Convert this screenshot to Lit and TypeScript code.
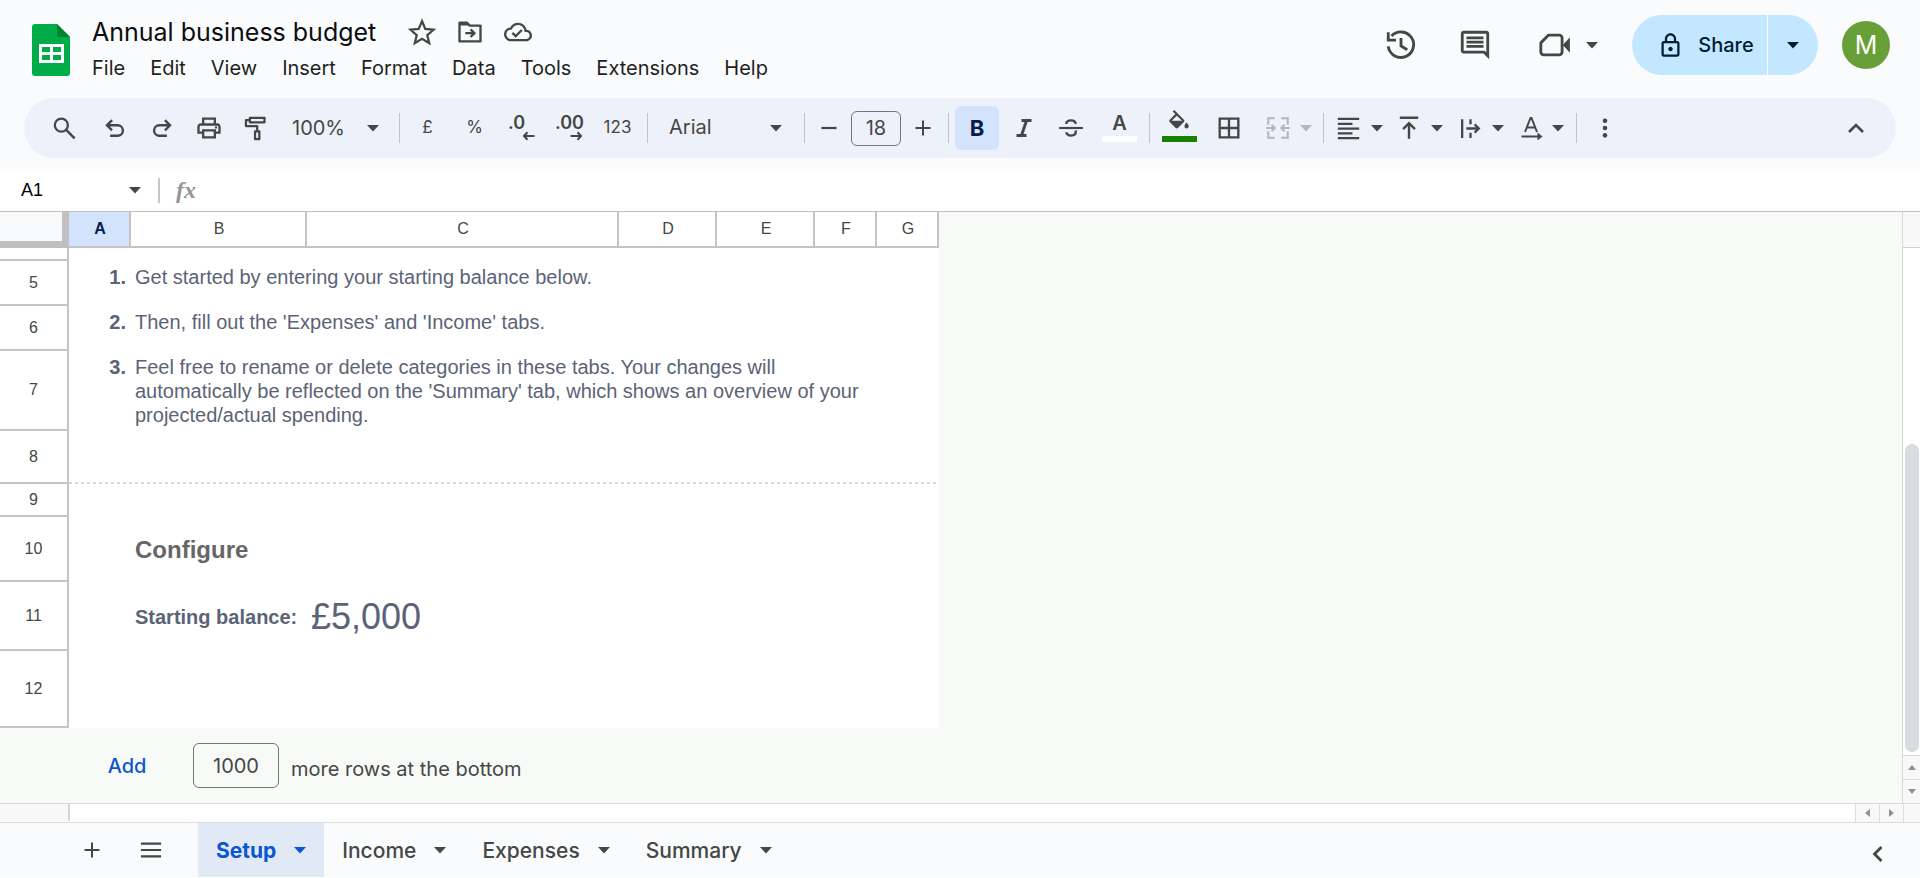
import { LitElement, html, css, svg, nothing } from "lit";
import { customElement, property } from "lit/decorators.js";

const icons: Record<string, unknown> = {
  star: svg`<path d="M12 2.6l2.8 6.7 7.2.6-5.5 4.7 1.7 7-6.2-3.7-6.2 3.7 1.7-7L2 9.900l7.200-.6z" fill="none" stroke="currentColor" stroke-width="1.900"/>`,
  move: svg`<path d="M3 4h6.500l2 2.500H21V20H3z" fill="none" stroke="currentColor" stroke-width="2" stroke-linejoin="round"/><path d="M3 3.500h6.500l2 3H3z" fill="currentColor"/><path d="M8 13h7M12.500 9.700l3.300 3.300-3.300 3.300" fill="none" stroke="currentColor" stroke-width="2"/>`,
  cloud: svg`<path d="M19.350 10.040C18.670 6.590 15.640 4 12 4 9.110 4 6.600 5.640 5.350 8.040 2.340 8.360 0 10.910 0 14c0 3.310 2.690 6 6 6h13c2.760 0 5-2.240 5-5 0-2.640-2.050-4.780-4.650-4.960zM19 18H6c-2.210 0-4-1.790-4-4 0-2.050 1.530-3.760 3.560-3.970l1.070-.11.5-.95C8.080 7.140 9.940 6 12 6c2.620 0 4.880 1.860 5.390 4.430l.3 1.500 1.530.11c1.560.1 2.780 1.410 2.780 2.960 0 1.650-1.350 3-3 3zm-9-3.820l-2.090-2.090L6.500 13.500 10 17l6.010-6.010-1.410-1.410z" fill="currentColor"/>`,
  history: svg`<path d="M5.300 5.700A9 9 0 1 1 3 13M3 3v5.500h5.500" fill="none" stroke="currentColor" stroke-width="2"/><path d="M12 7v5.600l4.400 2.700" fill="none" stroke="currentColor" stroke-width="2"/>`,
  comment: svg`<path d="M21.990 4c0-1.100-.89-2-1.990-2H4c-1.100 0-2 .9-2 2v12c0 1.100.9 2 2 2h14l4 4-.01-18zM20 4v13.170L18.830 16H4V4h16zM6 12h12v2H6zm0-3h12v2H6zm0-3h12v2H6z" fill="currentColor"/>`,
  camera: svg`<path d="M7.500 5H15a2 2 0 0 1 2 2v10a2 2 0 0 1-2 2H4a2 2 0 0 1-2-2v-6.500z" fill="none" stroke="currentColor" stroke-width="2" stroke-linejoin="round"/><path d="M17.500 12L22.500 6.500v11z" fill="currentColor"/>`,
  lock: svg`<path d="M18 8h-1V6c0-2.760-2.240-5-5-5S7 3.240 7 6v2H6c-1.100 0-2 .9-2 2v10c0 1.100.9 2 2 2h12c1.100 0 2-.9 2-2V10c0-1.100-.9-2-2-2zM9 6c0-1.660 1.340-3 3-3s3 1.340 3 3v2H9V6zm9 14H6V10h12v10zm-6-3c1.100 0 2-.9 2-2s-.9-2-2-2-2 .9-2 2 .9 2 2 2z" fill="currentColor"/>`,
  search: svg`<circle cx="9.200" cy="9" r="5.800" fill="none" stroke="currentColor" stroke-width="2"/><path d="M13.500 13.300l7.500 7.500" stroke="currentColor" stroke-width="2.200"/>`,
  undo: svg`<path d="M5 9.500h9.500a4.800 4.800 0 0 1 0 9.600H7.500M9.300 4.800L4.600 9.500l4.700 4.700" fill="none" stroke="currentColor" stroke-width="2.200"/>`,
  redo: svg`<path d="M19 9.500H9.500a4.800 4.800 0 0 0 0 9.600h7M14.700 4.800l4.700 4.700-4.700 4.700" fill="none" stroke="currentColor" stroke-width="2.200"/>`,
  print: svg`<path d="M19 8h-1V3H6v5H5c-1.660 0-3 1.340-3 3v6h4v4h12v-4h4v-6c0-1.660-1.340-3-3-3zM8 5h8v3H8V5zm8 12v2H8v-4h8v2zm2-2v-2H6v2H4v-4c0-.55.45-1 1-1h14c.55 0 1 .45 1 1v4h-2z" fill="currentColor"/><circle cx="18" cy="11.500" r="1" fill="currentColor"/>`,
  paint: svg`<path d="M7 2.500h13v4H7zM7 4.500H3.500v5.300h10v4.700M11.600 14.500h3.800v7h-3.800z" fill="none" stroke="currentColor" stroke-width="2" stroke-linejoin="round"/>`,
  minus: svg`<path d="M4.500 12h15" stroke="currentColor" stroke-width="2.200"/>`,
  plus: svg`<path d="M4.500 12h15M12 4.500v15" stroke="currentColor" stroke-width="2"/>`,
  left: svg`<path d="M1 14h22M9 6.500L2 14l7 7.500" fill="none" stroke="currentColor" stroke-width="4"/>`,
  right: svg`<path d="M1 14h22M15 6.500l7 7.500-7 7.500" fill="none" stroke="currentColor" stroke-width="4"/>`,
  italic: svg`<path d="M9.500 4.500h10M4.500 19.500h10M14.500 4.500l-5 15" fill="none" stroke="currentColor" stroke-width="3"/>`,
  strike: svg`<path d="M1 12h22" stroke="currentColor" stroke-width="2"/><path d="M16.500 8.200C16 6 14.300 5 12 5 9.600 5 7.600 6 7.600 8.300M7.500 16c.5 2 2.200 3 4.500 3 2.500 0 4.400-1 4.400-3.200 0-.6-.1-1-.3-1.500" fill="none" stroke="currentColor" stroke-width="2.200"/>`,
  bucket: svg`<path d="M16.560 8.940L7.620 0 6.210 1.410l2.380 2.380-5.150 5.150c-.59.59-.59 1.540 0 2.120l5.500 5.500c.29.29.68.44 1.060.44s.77-.15 1.060-.44l5.500-5.500c.59-.58.59-1.530 0-2.120zM5.210 10L10 5.210 14.790 10H5.210zM19 11.500s-2 2.170-2 3.500c0 1.100.9 2 2 2s2-.9 2-2c0-1.330-2-3.500-2-3.500z" fill="currentColor"/>`,
  borders: svg`<path d="M3 3v18h18V3H3zm8 16H5v-6h6v6zm0-8H5V5h6v6zm8 8h-6v-6h6v6zm0-8h-6V5h6v6z" fill="currentColor"/>`,
  merge: svg`<path d="M9 3H3v6M9 21H3v-6M15 3h6v6M15 21h6v-6M1 12h8M6 9l3 3-3 3M23 12h-8M18 9l-3 3 3 3" fill="none" stroke="currentColor" stroke-width="2"/>`,
  align: svg`<path d="M2.500 3.500h19M2.500 7.800h13M2.500 12h19M2.500 16.300h13M2.500 20.500h19" stroke="currentColor" stroke-width="2"/>`,
  valign: svg`<path d="M3.500 2.500h17M12 22V8M6.500 13L12 7.500l5.500 5.500" fill="none" stroke="currentColor" stroke-width="2.200"/>`,
  wrap: svg`<path d="M4 3v18M12 3v5M12 16v5M8 12h12M16 8l4 4-4 4" fill="none" stroke="currentColor" stroke-width="2.200"/>`,
  rotate: svg`<path d="M6 16L11.500 2h1L18 16M8 11.500h8M2.500 20.500H20" fill="none" stroke="currentColor" stroke-width="2"/><path d="M18.500 16.500l5 4-5 4z" fill="currentColor"/>`,
  dots: svg`<circle cx="12" cy="4" r="2.500" fill="currentColor"/><circle cx="12" cy="12" r="2.500" fill="currentColor"/><circle cx="12" cy="20" r="2.500" fill="currentColor"/>`,
  up: svg`<path d="M5 16l7-7 7 7" fill="none" stroke="currentColor" stroke-width="2.600"/>`,
  back: svg`<path d="M15.500 5l-7 7 7 7" fill="none" stroke="currentColor" stroke-width="2.800"/>`,
  menu: svg`<path d="M1 5h22M1 12h22M1 19h22" stroke="currentColor" stroke-width="2.400"/>`,
};

const icon = (name: string, size = 24) =>
  html`<svg width=${size} height=${size} viewBox="0 0 24 24" aria-hidden="true">${icons[name]}</svg>`;

const caret = html`<svg class="caret" width="12" height="7" viewBox="0 0 12 7" aria-hidden="true">
  <path d="M0 0h12L6 6.500z" fill="currentColor" />
</svg>`;

const shared = css`
  * { box-sizing: border-box; }
  button, input, select { font: inherit; color: inherit; border: 0; background: none; padding: 0; margin: 0; border-radius: 0; }
  button { display: flex; align-items: center; justify-content: center; cursor: pointer; }
  svg { display: block; flex: none; }
`;

@customElement("doc-header")
class DocHeader extends LitElement {
  static styles = [shared, css`
    :host { display: flex; align-items: flex-start; justify-content: space-between; height: 98px; padding: 0 30px 0 32px; }
    .left, .right, .name { display: flex; }
    .logo { margin: 24px 22px 0 0; }
    .name { align-items: center; gap: 20px; height: 36px; padding-top: 3px; margin-top: 12px; color: #444746; }
    .name h1 { margin: 0 12px 0 0; font-size: 25px; line-height: 36px; font-weight: 400; color: #0c0d0e; white-space: nowrap; }
    .menus { display: flex; gap: 25px; margin-top: 4px; font-size: 20px; line-height: 32px; color: #1f1f1f; }
    .right { align-items: center; height: 60px; margin-top: 15px; color: #444746; }
    .tool { width: 74px; height: 48px; }
    .meet { width: 100px; gap: 14px; height: 48px; margin: 0 14px 0 6px; }
    .share { display: flex; height: 60px; gap: 1px; color: #001d35; font-size: 20px; font-weight: 500; }
    .share button { background: #c2e7ff; }
    .share .main { width: 135px; gap: 14px; padding-left: 12px; border-radius: 30px 0 0 30px; }
    .share .more { width: 50px; border-radius: 0 30px 30px 0; }
    .avatar { width: 48px; height: 48px; border-radius: 50%; margin-left: 24px; background: #689f38; color: #fff; font-size: 25px; }
  `];
  render() {
    return html`
      <div class="left">
        <svg class="logo" width="38" height="52" viewBox="0 0 38 52" role="img" aria-label="Sheets">
          <path d="M3 0h22l13 13v36a3 3 0 0 1-3 3H3a3 3 0 0 1-3-3V3a3 3 0 0 1 3-3z" fill="#00ac47" />
          <path d="M25 0l13 13H25z" fill="#00832d" />
          <path d="M7 20h25v19H7zm3 3v5h8v-5zm11 0v5h8v-5zm-11 8v5h8v-5zm11 0v5h8v-5z" fill="#fff" fill-rule="evenodd" />
        </svg>
        <div>
          <div class="name">
            <h1>Annual business budget</h1>
            <button aria-label="Star">${icon("star", 28)}</button>
            <button aria-label="Move">${icon("move", 28)}</button>
            <button aria-label="Saved to cloud">${icon("cloud", 28)}</button>
          </div>
          <nav class="menus">
            ${["File", "Edit", "View", "Insert", "Format", "Data", "Tools", "Extensions", "Help"].map((m) => html`<button>${m}</button>`)}
          </nav>
        </div>
      </div>
      <div class="right">
        <button class="tool" aria-label="Version history">${icon("history", 34)}</button>
        <button class="tool" aria-label="Comments">${icon("comment", 34)}</button>
        <button class="meet" aria-label="Join a call">${icon("camera", 34)}${caret}</button>
        <div class="share">
          <button class="main">${icon("lock", 27)}<span>Share</span></button>
          <button class="more" aria-label="Sharing options">${caret}</button>
        </div>
        <button class="avatar" aria-label="Account">M</button>
      </div>`;
  }
}

@customElement("tool-bar")
class ToolBar extends LitElement {
  static styles = [shared, css`
    :host { display: flex; align-items: center; height: 60px; margin: 0 24px 11px; padding: 0 17px; border-radius: 30px; background: #edf2fa; color: #444746; font-size: 20px; }
    button { width: 47px; height: 44px; flex: none; }
    .find { margin-right: 3px; }
    .sep { width: 1px; height: 30px; margin: 0 4px; background: #c0c4ca; flex: none; }
    .pick { display: grid; align-items: center; height: 44px; flex: none; }
    .pick > * { grid-area: 1 / 1; }
    .pick .caret { justify-self: end; margin-right: 16px; pointer-events: none; }
    .pick select { appearance: none; width: 100%; height: 44px; outline: 0; }
    .zoom { width: 116px; }
    .zoom select { padding-left: 13px; }
    .font { width: 148px; }
    .font .caret { margin-right: 18px; }
    .font select { padding: 0 0 2px 17px; }
    .small { font-size: 17px; padding-bottom: 2px; }
    .places { flex-direction: column; font-weight: 600; font-size: 18px; line-height: 18px; align-items: stretch; padding-bottom: 2px; }
    .places span { text-align: left; padding-left: 10px; }
    .places svg { margin: -3px 10px 0 auto; }
    .wide { width: 51px; }
    .size { display: flex; align-items: center; justify-content: center; gap: 4px; width: 135px; padding-right: 1px; flex: none; }
    .size button { width: 36px; }
    .size input { width: 50px; height: 35px; border: 1px solid #747775; border-radius: 6px; text-align: center; }
    .format { width: 44px; margin: 0 1px 0 2px; }
    .bold { background: #d3e3fd; border-radius: 6px; color: #041e49; font-size: 22px; font-weight: 700; }
    .swatch { flex-direction: column; justify-content: flex-start; width: 47px; margin: 0 2px; padding-top: 4px; }
    .swatch.fill { width: 50px; margin: 0; }
    .letter { font-size: 20px; line-height: 26px; font-weight: 600; }
    .bar { width: 35px; height: 6px; background: #fff; }
    .fill .bar { background: #188000; }
    .edge { width: 50px; }
    .menu { width: 61px; gap: 9px; }
    .merge { width: 65px; gap: 9px; padding-left: 4px; color: #b4b8bd; }
    .collapse { margin-left: auto; }
  `];
  render() {
    const sep = html`<span class="sep"></span>`;
    return html`
      <button class="find" aria-label="Search the menus">${icon("search", 27)}</button>
      <button aria-label="Undo">${icon("undo", 26)}</button>
      <button aria-label="Redo">${icon("redo", 26)}</button>
      <button aria-label="Print">${icon("print", 28)}</button>
      <button aria-label="Paint format">${icon("paint", 27)}</button>
      <div class="pick zoom"><select aria-label="Zoom"><option>100%</option></select>${caret}</div>
      ${sep}
      <button class="small">£</button>
      <button class="small">%</button>
      <button class="places" aria-label="Decrease decimal places"><span>.0</span>${icon("left", 12)}</button>
      <button class="places" aria-label="Increase decimal places"><span>.00</span>${icon("right", 12)}</button>
      <button class="small wide">123</button>
      ${sep}
      <div class="pick font"><select aria-label="Font"><option>Arial</option></select>${caret}</div>
      ${sep}
      <div class="size">
        <button aria-label="Decrease font size">${icon("minus")}</button>
        <input aria-label="Font size" value="18" />
        <button aria-label="Increase font size">${icon("plus")}</button>
      </div>
      ${sep}
      <button class="format bold">B</button>
      <button class="format" aria-label="Italic">${icon("italic", 24)}</button>
      <button class="format" aria-label="Strikethrough">${icon("strike", 26)}</button>
      <button class="swatch" aria-label="Text colour"><span class="letter">A</span><span class="bar"></span></button>
      ${sep}
      <button class="swatch fill" aria-label="Fill colour">${icon("bucket", 26)}<span class="bar"></span></button>
      <button class="edge" aria-label="Borders">${icon("borders", 28)}</button>
      <button class="merge" aria-label="Merge cells">${icon("merge", 26)}${caret}</button>
      ${sep}
      <button class="menu" aria-label="Horizontal align">${icon("align", 27)}${caret}</button>
      <button class="menu" aria-label="Vertical align">${icon("valign", 26)}${caret}</button>
      <button class="menu" aria-label="Text wrapping">${icon("wrap", 25)}${caret}</button>
      <button class="menu" aria-label="Text rotation">${icon("rotate", 24)}${caret}</button>
      ${sep}
      <button aria-label="More">${icon("dots", 22)}</button>
      <button class="collapse" aria-label="Hide the menus">${icon("up", 24)}</button>`;
  }
}

@customElement("formula-bar")
class FormulaBar extends LitElement {
  static styles = [shared, css`
    :host { display: flex; align-items: center; box-sizing: border-box; height: 43px; background: #fff; border-bottom: 1px solid #c0c0c0; font-family: "Liberation Sans", Arial, sans-serif; font-size: 18px; color: #000; }
    .cell { width: 120px; height: 32px; padding-left: 21px; outline: 0; }
    .open { width: 30px; height: 32px; color: #444746; }
    .sep { width: 2px; height: 25px; margin: 0 16px 0 8px; background: #c7c7c7; }
    label { font: italic 700 24px "Liberation Serif", serif; color: #959595; }
    .formula { flex: 1; height: 32px; padding-left: 12px; outline: 0; }
  `];
  render() {
    return html`
      <input class="cell" aria-label="Name box" value="A1" />
      <button class="open" aria-label="Named ranges">${caret}</button>
      <span class="sep"></span>
      <label for="formula">fx</label>
      <input class="formula" id="formula" />`;
  }
}

type Row = { n: string; h: number; a?: string; b?: string; c?: string; kind?: string };
const rows: Row[] = [
  { n: "", h: 13 },
  { n: "5", h: 45, a: "1.", b: "Get started by entering your starting balance below." },
  { n: "6", h: 45, a: "2.", b: "Then, fill out the 'Expenses' and 'Income' tabs." },
  { n: "7", h: 80, a: "3.", b: "Feel free to rename or delete categories in these tabs. Your changes will automatically be reflected on the 'Summary' tab, which shows an overview of your projected/actual spending." },
  { n: "8", h: 53, kind: "dashed" },
  { n: "9", h: 33 },
  { n: "10", h: 65, b: "Configure", kind: "heading" },
  { n: "11", h: 69, b: "Starting balance:", c: "£5,000", kind: "balance" },
  { n: "12", h: 77 },
];
const columns = [["A", 62], ["B", 176], ["C", 312], ["D", 98], ["E", 98], ["F", 62], ["G", 62]] as const;

@customElement("sheet-grid")
class SheetGrid extends LitElement {
  static styles = [shared, css`
    :host { display: flex; flex: 1; min-height: 0; background: #f8faf7; }
    .area { flex: 1; min-width: 0; overflow: hidden; }
    table { border-collapse: separate; border-spacing: 0; table-layout: fixed; width: 939px; font-family: "Liberation Sans", Arial, sans-serif; }
    th { padding: 0 0 0 2px; border: solid #c4c4c4; border-width: 0 2px 2px 0; background: #fff; font-size: 16px; line-height: 18px; font-weight: 400; color: #444746; }
    tbody th { padding: 0; }
    thead tr { height: 36px; }
    thead .corner { background: #f8f9fb; border-color: #c0c0c0; border-width: 0 7px 7px 0; }
    thead .active { background: #d3e3fd; color: #041e49; font-weight: 700; }
    td { padding: 4px 4px 0 4px; background: #fff; font-size: 20px; line-height: 24px; color: #5b6377; vertical-align: top; }
    td.num { padding: 4px 5px 0 0; text-align: right; font-weight: 700; }
    tr.blank td { padding: 0; }
    .dashed td { padding: 0; vertical-align: bottom; }
    .dash { height: 2px; background: repeating-linear-gradient(90deg, #d9d9d9 0 3px, #fff 3px 6px); }
    .heading td { padding-top: 0; vertical-align: middle; font-size: 24px; font-weight: 700; color: #666; }
    .balance td { padding-top: 0; vertical-align: middle; font-weight: 700; }
    .balance td.amount { font-size: 36px; line-height: 40px; font-weight: 400; }
    .add { display: flex; align-items: center; height: 75px; padding-left: 97px; font-size: 20px; color: #444746; }
    .add button { width: 60px; height: 44px; color: #0b57d0; font-weight: 500; }
    .add input { width: 86px; height: 45px; margin: 0 12px 0 36px; border: 1px solid #747775; border-radius: 6px; text-align: center; }
    .add label { padding-top: 6px; }
    .track { display: flex; flex-direction: column; width: 18px; border-left: 1px solid #d5d8d5; background: #fff; color: #909090; }
    .cap { height: 36px; background: #f8f8f8; border-bottom: 1px solid #d0d0d0; }
    .space { flex: 196; }
    .thumb { flex: 309; width: 14px; margin-left: 2px; border-radius: 7px; background: #dadce0; }
    .track button { height: 24px; background: #f8f8f8; border-top: 1px solid #dcdcdc; }
    .thumb + button { margin-top: 3px; }
  `];
  cells(r: Row) {
    if (r.kind === "dashed") return html`<td colspan="7"><div class="dash"></div></td>`;
    if (r.c) return html`<td></td><td>${r.b}</td><td class="amount">${r.c}</td><td colspan="4"></td>`;
    if (r.b) return html`<td class="num">${r.a ?? nothing}</td><td colspan="5">${r.b}</td><td></td>`;
    return html`<td colspan="7"></td>`;
  }
  render() {
    return html`
      <div class="area">
        <table>
          <colgroup><col style="width:69px" />${columns.map(([, w]) => html`<col style="width:${w}px" />`)}</colgroup>
          <thead><tr><th class="corner"></th>${columns.map(([c]) => html`<th class=${c === "A" ? "active" : ""}>${c}</th>`)}</tr></thead>
          <tbody>${rows.map((r) => html`<tr class=${r.kind ?? (r.b ? "" : "blank")} style="height:${r.h}px"><th>${r.n}</th>${this.cells(r)}</tr>`)}</tbody>
        </table>
        <div class="add">
          <button>Add</button>
          <input id="more" value="1000" />
          <label for="more">more rows at the bottom</label>
        </div>
      </div>
      <div class="track">
        <div class="cap"></div>
        <div class="space"></div>
        <div class="thumb"></div>
        <button aria-label="Scroll up"><svg width="8" height="5" viewBox="0 0 8 5"><path d="M4 0l4 5H0z" fill="currentColor" /></svg></button>
        <button aria-label="Scroll down"><svg width="8" height="5" viewBox="0 0 8 5"><path d="M4 5l4-5H0z" fill="currentColor" /></svg></button>
      </div>`;
  }
}

@customElement("sheet-tabs")
class SheetTabs extends LitElement {
  @property() active = "Setup";
  static styles = [shared, css`
    :host { display: block; }
    .scroll { display: flex; height: 19px; border-top: 1px solid #d9dcd9; background: #fff; color: #909090; }
    .stub { width: 70px; background: #f8f8f8; border-right: 2px solid #d5d5d5; margin-bottom: 1px; }
    .lane { flex: 1; }
    .scroll button { width: 24px; background: #f8f8f8; border-left: 1px solid #dcdcdc; }
    .scroll .end { width: 17px; background: #f8f8f8; border-left: 1px solid #dcdcdc; }
    .tabs { display: flex; height: 56px; border-top: 1px solid #d9dce0; border-bottom: 1px solid #fff; background: #f9fbfd; color: #444746; font-size: 21px; font-weight: 500; }
    .tool { width: 59px; }
    .add { margin-left: 62px; }
    .list { margin-right: 18px; }
    .tab { gap: 18px; padding: 0 18px; }
    .tab.on { background: #e1e9f7; color: #0b57d0; font-weight: 700; }
    .side { margin-left: auto; width: 47px; margin-right: 19px; padding-top: 8px; }
  `];
  render() {
    return html`
      <div class="scroll">
        <div class="stub"></div><div class="lane"></div>
        <button aria-label="Scroll left"><svg width="5" height="8" viewBox="0 0 5 8"><path d="M0 4l5-4v8z" fill="currentColor" /></svg></button>
        <button aria-label="Scroll right"><svg width="5" height="8" viewBox="0 0 5 8"><path d="M5 4L0 0v8z" fill="currentColor" /></svg></button>
        <div class="end"></div>
      </div>
      <div class="tabs">
        <button class="tool add" aria-label="Add sheet">${icon("plus")}</button>
        <button class="tool list" aria-label="All sheets">${icon("menu", 22)}</button>
        ${["Setup", "Income", "Expenses", "Summary"].map((t) => html`<button class="tab ${t === this.active ? "on" : ""}">${t}${caret}</button>`)}
        <button class="side" aria-label="Show side panel">${icon("back", 24)}</button>
      </div>`;
  }
}

@customElement("app-root")
class AppRoot extends LitElement {
  static styles = css`
    :host { display: flex; flex-direction: column; height: 100vh; overflow: hidden; background: #f9fbfd; font-family: Inter, "Open Sans", sans-serif; }
  `;
  render() {
    return html`
      <doc-header></doc-header>
      <tool-bar></tool-bar>
      <formula-bar></formula-bar>
      <sheet-grid></sheet-grid>
      <sheet-tabs></sheet-tabs>`;
  }
}
